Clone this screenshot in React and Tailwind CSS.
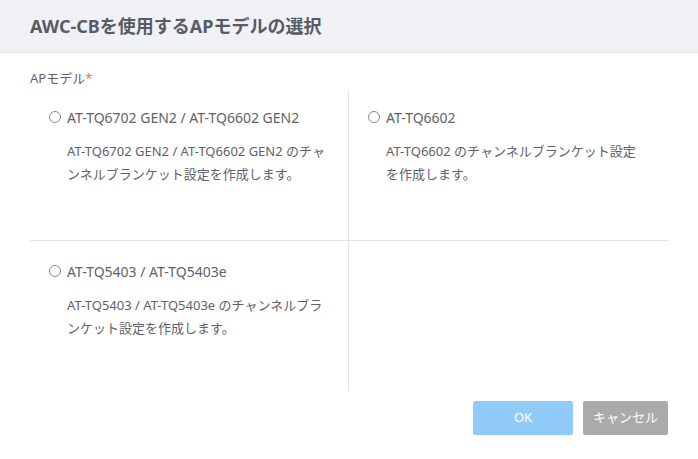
const models = [
  {
    name: "AT-TQ6702 GEN2 / AT-TQ6602 GEN2",
    desc: "AT-TQ6702 GEN2 / AT-TQ6602 GEN2 のチャンネルブランケット設定を作成します。",
  },
  {
    name: "AT-TQ6602",
    desc: "AT-TQ6602 のチャンネルブランケット設定を作成します。",
  },
  {
    name: "AT-TQ5403 / AT-TQ5403e",
    desc: "AT-TQ5403 / AT-TQ5403e のチャンネルブランケット設定を作成します。",
  },
  null,
];

const Cell = ({ model, top, left }) => (
  <div
    className={`h-[150px] px-[19px] ${top ? "border-b pt-[16px]" : "pt-[20px]"} ${
      left ? "border-r" : ""
    } border-[#e4e4e4]`}
  >
    {model && (
      <>
        <label className="flex items-center gap-[6px] h-[20px] cursor-pointer">
          <span className="w-[12px] h-[12px] rounded-full border border-[#8a8a8a] bg-white" />
          <span className="text-[14px] text-[#5f6269]">{model.name}</span>
        </label>
        <p className="mt-[13px] pl-[18px] pr-[2px] text-[13px] leading-[23px] text-[#5f6269]">
          {model.desc}
        </p>
      </>
    )}
  </div>
);

export default function App() {
  return (
    <div
      className="w-[698px] h-[459px] bg-white flex flex-col"
      style={{ fontFamily: '"Noto Sans", "Noto Sans CJK JP", sans-serif' }}
    >
      <div className="h-[53px] bg-[#f0f1f5] border-b border-[#e2e3e8] flex items-center px-[30px]">
        <h1 className="text-[18px] font-bold text-[#575b63]">AWC-CBを使用するAPモデルの選択</h1>
      </div>

      <div className="px-[30px] pt-[16px]">
        <div className="h-[20px] flex items-center text-[13px] text-[#5f6269]">
          APモデル<span className="text-[#f56c6c]">*</span>
        </div>
        <div className="mt-[2px] grid grid-cols-[319px_320px]">
          {models.map((m, i) => (
            <Cell key={i} model={m} top={i < 2} left={i % 2 === 0} />
          ))}
        </div>
        <div className="mt-[10px] flex justify-end gap-[10px]">
          <button className="w-[100px] h-[34px] rounded-[2px] bg-[#90caf9] text-white text-[13px]">
            OK
          </button>
          <button className="w-[85px] h-[34px] rounded-[2px] bg-[#aaaaaa] text-white text-[13px]">
            キャンセル
          </button>
        </div>
      </div>
    </div>
  );
}
